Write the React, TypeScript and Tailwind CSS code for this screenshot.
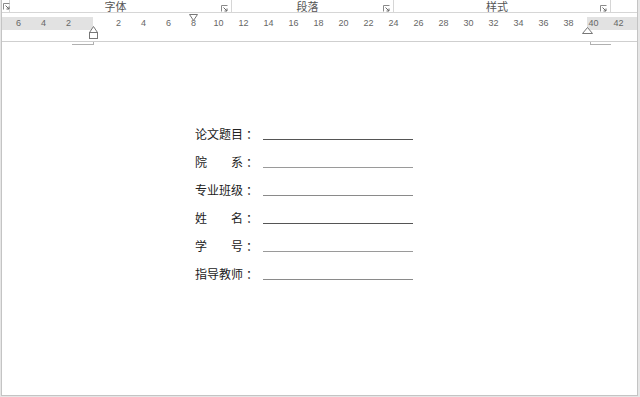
import React from 'react';

const RULER = ['6', '4', '2', '', '2', '4', '6', '8', '10', '12', '14', '16', '18', '20', '22', '24', '26', '28', '30', '32', '34', '36', '38', '40', '42'];

const FIELDS = [
  { chars: ['论', '文', '题', '目'], line: 'border-[#555]' },
  { chars: ['院', '系'], line: 'border-[#9a9a9a]' },
  { chars: ['专', '业', '班', '级'], line: 'border-[#8a8a8a]' },
  { chars: ['姓', '名'], line: 'border-[#555]' },
  { chars: ['学', '号'], line: 'border-[#9a9a9a]' },
  { chars: ['指', '导', '教', '师'], line: 'border-[#8a8a8a]' },
];

const Launcher = () => (
  <svg width="7" height="7" viewBox="0 0 7 7" className="shrink-0">
    <path d="M0.5 6.5V0.5H6.5" fill="none" stroke="#8a8a8a" strokeWidth="1" />
    <path d="M2.5 2.5L6 6M6 3.5V6H3.5" fill="none" stroke="#6a6a6a" strokeWidth="1" />
  </svg>
);

const Group = ({ label, className }: { label: string; className: string }) => (
  <div className={`flex h-full items-center border-r border-[#d6d6d6] ${className}`}>
    <span className="flex-1 text-center text-[11px] leading-none text-[#555]">{label}</span>
    <div className="mr-[3px] mt-[4px]">
      <Launcher />
    </div>
  </div>
);

export default function App() {
  return (
    <div
      className="w-[640px] h-[397px] overflow-hidden bg-[#e6e6e6] pl-[1px] pr-[2px] pb-[1px]"
      style={{ fontFamily: '"Noto Sans CJK SC", "Liberation Sans", sans-serif' }}
    >
      <div className="relative flex h-full flex-col border-x border-b border-[#c4c4c4] bg-white">
        {/* ribbon group labels */}
        <div className="flex h-[13px] border-b border-[#d6d6d6]">
          <div className="flex w-[8px] items-start border-r border-[#d6d6d6] pl-[1px] pt-[3px]">
            <Launcher />
          </div>
          <Group label="字体" className="w-[222px]" />
          <Group label="段落" className="w-[162px]" />
          <Group label="样式" className="w-[217px]" />
          <div className="flex-1" />
        </div>

        {/* ruler */}
        <div className="relative mt-[4px] h-[13px] bg-[linear-gradient(to_right,#e2e2e2_91px,#ffffff_91px,#ffffff_585px,#e2e2e2_585px)]">
          <div className="flex h-full items-center pl-[4px]">
            {RULER.map((n, i) => (
              <span key={i} className="w-[25px] shrink-0 text-center text-[9px] leading-none text-[#666]" style={{ fontFamily: '"Liberation Sans", Arial, sans-serif' }}>
                {n}
              </span>
            ))}
          </div>
          {/* first line indent */}
          <svg className="absolute left-[187px] top-[-3px]" width="9" height="9" viewBox="0 0 9 9">
            <path d="M0.5 0.5H8.5L4.5 6.5Z" fill="#fff" stroke="#777" />
          </svg>
          {/* left indent */}
          <svg className="absolute left-[87px] top-[9px]" width="9" height="13" viewBox="0 0 9 13">
            <path d="M4.5 0.5L8.5 6.5H0.5Z" fill="#fff" stroke="#777" />
            <rect x="0.5" y="6.5" width="8" height="6" fill="#fff" stroke="#777" />
          </svg>
          {/* right indent */}
          <svg className="absolute left-[580px] top-[10px]" width="11" height="7" viewBox="0 0 11 7">
            <path d="M5.5 0.5L10.5 6.5H0.5Z" fill="#fff" stroke="#777" />
          </svg>
        </div>

        <div className="h-[12px] border-b border-[#cfcfcf]" />

        {/* page */}
        <div className="relative flex-1">
          <div className="absolute left-[70px] top-0 h-[3px] w-[22px] border-b border-r border-[#b0b0b0]" />
          <div className="absolute left-[588px] top-0 h-[3px] w-[21px] border-b border-l border-[#b0b0b0]" />

          <div className="ml-[193px] mt-[86px] flex flex-col gap-[16px] text-[12px] leading-[12px] text-[#222]">
            {FIELDS.map((f, i) => (
              <div key={i} className="flex h-[12px] items-end">
                <div className="flex w-[48px] justify-between">
                  {f.chars.map((c, j) => (
                    <span key={j}>{c}</span>
                  ))}
                </div>
                <span className="ml-[3px] w-[12px]">：</span>
                <div className={`ml-[5px] w-[150px] border-b ${f.line}`} />
              </div>
            ))}
          </div>
        </div>
      </div>
    </div>
  );
}
